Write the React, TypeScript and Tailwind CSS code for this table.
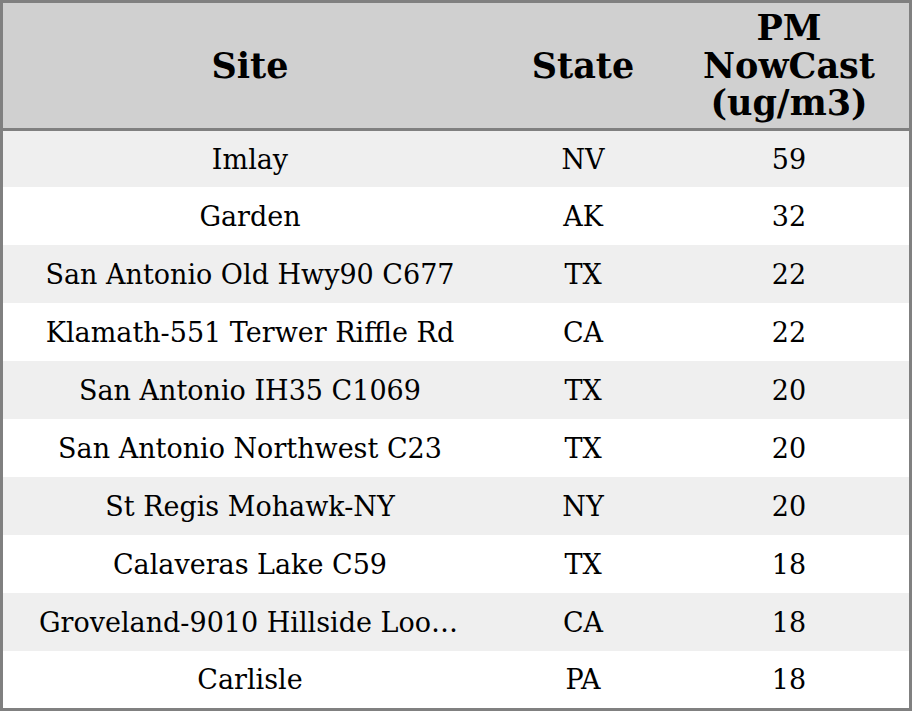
import React from "react";

const rows: [string, string, string][] = [
  ["Imlay", "NV", "59"],
  ["Garden", "AK", "32"],
  ["San Antonio Old Hwy90 C677", "TX", "22"],
  ["Klamath-551 Terwer Riffle Rd", "CA", "22"],
  ["San Antonio IH35 C1069", "TX", "20"],
  ["San Antonio Northwest C23", "TX", "20"],
  ["St Regis Mohawk-NY", "NY", "20"],
  ["Calaveras Lake C59", "TX", "18"],
  ["Groveland-9010 Hillside Loop Rd", "CA", "18"],
  ["Carlisle", "PA", "18"],
];

export default function App() {
  return (
    <div
      className="w-[912px] h-[711px] border-[3px] border-[#808080] bg-white text-black overflow-hidden flex flex-col"
      style={{ fontFamily: '"DejaVu Serif", serif' }}
    >
      <div className="grid grid-cols-[494px_172px_240px] h-[128px] shrink-0 bg-[#d0d0d0] border-b-[3px] border-[#808080] font-bold text-[35px] leading-[37.5px] text-center">
        <div className="flex items-center justify-center">Site</div>
        <div className="flex items-center justify-center">State</div>
        <div className="flex items-center justify-center">
          PM
          <br />
          NowCast
          <br />
          (ug/m3)
        </div>
      </div>
      <div className="flex flex-col flex-1">
        {rows.map((r, i) => (
          <div
            key={i}
            className={`grid grid-cols-[494px_172px_240px] text-[27px] items-center text-center pt-[2px] ${
              i === 0 ? "h-[56px] shrink-0" : i === rows.length - 1 ? "flex-1" : "h-[58px] shrink-0"
            } ${i % 2 === 0 ? "bg-[#efefef]" : "bg-white"}`}
          >
            <div className="px-9 whitespace-nowrap overflow-hidden text-ellipsis">{r[0]}</div>
            <div>{r[1]}</div>
            <div>{r[2]}</div>
          </div>
        ))}
      </div>
    </div>
  );
}
